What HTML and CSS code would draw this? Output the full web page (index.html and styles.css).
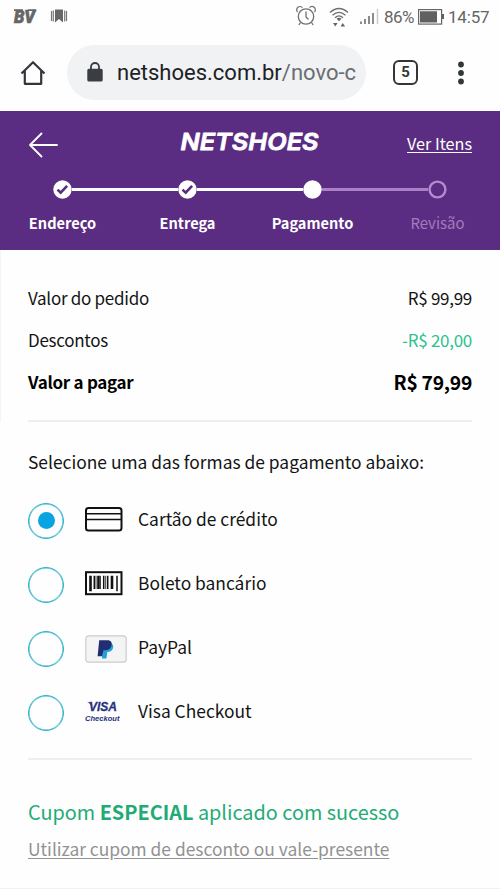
FILE: index.html
```html
<!DOCTYPE html>
<html lang="pt-BR">
<head>
<meta charset="utf-8">
<title>Netshoes - Pagamento</title>
<link rel="stylesheet" href="styles.css">
</head>
<body>
<div class="status">
  <svg class="status-left" width="56" height="18" viewBox="0 0 56 18">
    <text class="bv" x="0" y="15" textLength="21" lengthAdjust="spacingAndGlyphs">BV</text>
    <path d="M0 2.200h9M14 2.200h8" stroke="#666" stroke-width="1.800"/>
    <path d="M41 1.500h8v13l-4-3.500-4 3.500z" fill="#666"/>
    <path d="M39.300 2.500v11M50.700 2.500v11M37.500 3v10M52.500 3v10" stroke="#777" stroke-width="1.200"/>
  </svg>
  <div class="status-right">
    <svg class="alarm" width="20" height="20" viewBox="0 0 20 20" fill="none" stroke="#707070" stroke-width="1.300">
      <circle cx="10" cy="10.500" r="7.700"/><path d="M10 5.500v5.500l2.500 2.500M1.500 6A3 3 0 0 1 6.500 1.700M13.500 1.700A3 3 0 0 1 18.500 6M4.500 16.500L2.800 19M15.500 16.500l1.700 2.500"/>
    </svg>
    <svg class="wifi" width="20" height="21" viewBox="0 0 20 21" fill="none" stroke="#707070" stroke-width="1.300">
      <path d="M1 5.500Q10-2.500 19 5.500M3.500 8.300Q10 2.500 16.500 8.300M6 10.800Q10 7 14 10.800"/>
      <path d="M7.500 11.600Q10 10 12.500 11.600L10 14.200zM4 16h4.600l-2.300 3.600zM11.500 19.600h4.600L13.800 16z" fill="#666" stroke="none"/>
    </svg>
    <svg class="signal" width="20" height="18" viewBox="0 0 20 18" stroke="#666" stroke-width="1.500">
      <path d="M1 13.500v2.500M5 11v5M9 8v8M13 5v11"/><path d="M17.500 1v15" stroke="#ccc"/>
    </svg>
    <span class="percent">86%</span>
    <svg class="battery" width="26" height="16" viewBox="0 0 26 16">
      <rect x=".6" y=".6" width="23" height="14.500" fill="none" stroke="#666" stroke-width="1.200"/>
      <path d="M2 2.200h17v11.300H2zM24 5h2v5h-2z" fill="#606060"/>
    </svg>
    <span class="clock">14:57</span>
  </div>
</div>

<div class="browser">
  <svg class="home" width="26" height="26" viewBox="0 0 26 26" fill="none" stroke="#333639" stroke-width="2.200">
    <path d="M1.500 13.500L13 2.200l11.500 11.300M4.800 11v12.800h16.400V11" stroke-linejoin="round"/>
  </svg>
  <div class="pill">
    <svg class="lock" width="16" height="20" viewBox="0 0 16 20">
      <rect x=".3" y="6.800" width="15.400" height="12.800" rx="1.600" fill="#3a3d41"/><path d="M4 7.500V5a4 4 0 0 1 8 0v2.500" fill="none" stroke="#3a3d41" stroke-width="1.800"/>
    </svg>
    <div class="url">netshoes.com.br<span>/novo-c</span></div>
  </div>
  <div class="tabs">5</div>
  <svg class="dots" width="6" height="24" viewBox="0 0 6 24" fill="#333639"><circle cx="3" cy="3.500" r="2.900"/><circle cx="3" cy="12" r="2.900"/><circle cx="3" cy="20.500" r="2.900"/></svg>
</div>

<header>
  <div class="bar">
    <svg class="back" width="30" height="26" viewBox="0 0 30 26" fill="none" stroke="#fff" stroke-width="1.800" stroke-linecap="round" stroke-linejoin="round"><path d="M13.500 1.500L2 13l11.500 11.500M2 13h27"/></svg>
    <svg class="logo" width="142" height="22" viewBox="0 0 142 22"><text x="1.500" y="18.500" textLength="138" lengthAdjust="spacingAndGlyphs">NETSHOES</text></svg>
    <a class="items">Ver Itens</a>
  </div>
  <div class="steps">
    <div class="step"><div class="track"><i class="blank"></i><svg class="dot" width="19" height="19" viewBox="0 0 19 19"><circle cx="9.500" cy="9.500" r="9.200" fill="#fff"/><path d="M4.500 9.600l3.200 3.100 6.400-6.900" fill="none" stroke="#5b2d82" stroke-width="2.600"/></svg><i></i></div><b>Endereço</b></div>
    <div class="step"><div class="track"><i></i><svg class="dot" width="19" height="19" viewBox="0 0 19 19"><circle cx="9.500" cy="9.500" r="9.200" fill="#fff"/><path d="M4.500 9.600l3.200 3.100 6.400-6.900" fill="none" stroke="#5b2d82" stroke-width="2.600"/></svg><i></i></div><b>Entrega</b></div>
    <div class="step"><div class="track"><i></i><svg class="dot" width="19" height="19" viewBox="0 0 19 19"><circle cx="9.500" cy="9.500" r="9.200" fill="#fff"/></svg><i class="todo"></i></div><b>Pagamento</b></div>
    <div class="step off"><div class="track"><i class="todo"></i><svg class="dot" width="19" height="19" viewBox="0 0 19 19"><circle cx="9.500" cy="9.500" r="7.900" fill="none" stroke="#b48ad0" stroke-width="2.400"/></svg><i class="blank"></i></div><b>Revisão</b></div>
  </div>
</header>

<main>
  <div class="summary">
    <section class="totals">
      <div class="row"><span>Valor do pedido</span><span>R$ 99,99</span></div>
      <div class="row"><span>Descontos</span><span class="discount">-R$ 20,00</span></div>
      <div class="row total"><span>Valor a pagar</span><span class="amount">R$ 79,99</span></div>
    </section>
  </div>
  <section class="methods">
    <p>Selecione uma das formas de pagamento abaixo:</p>
    <div class="method">
      <span class="radio on"></span>
      <span class="icon"><svg width="38" height="25" viewBox="0 0 38 25" fill="none" stroke="#111"><rect x="1" y="1" width="35.500" height="22.500" rx="2.500" stroke-width="2"/><path d="M1 6.800h35.500M1 12.500h35.500" stroke-width="1.500"/></svg></span>
      <span>Cartão de crédito</span>
    </div>
    <div class="method">
      <span class="radio"></span>
      <span class="icon"><svg width="38" height="25" viewBox="0 0 38 25" fill="none" stroke="#111"><rect x="1" y="1.200" width="35.500" height="22" stroke-width="2"/><path d="M5.500 4.800v15.400M13.500 4.800v13.200M27 4.800v13.200" stroke-width="2.600"/><path d="M9.300 4.800v13.200M18.700 4.800v13.200M22.700 4.800v13.200M32 4.800v15.400" stroke-width="1.500"/><path d="M11 4.800v13.200M15.500 4.800v13.200M20.700 4.800v13.200" stroke-width=".8"/></svg></span>
      <span>Boleto bancário</span>
    </div>
    <div class="method">
      <span class="radio"></span>
      <span class="icon paypal"><svg width="42" height="28" viewBox="0 0 42 28"><rect x=".8" y=".8" width="40.400" height="26.400" rx="3" fill="#f4f4f4" stroke="#ccc" stroke-width="1.200"/><path d="M18 8.500h8.500c2.200 1.300 2 4.400.8 6.300-1.200 1.800-2.800 2.200-5 2.200l-.9 6.500H17z" fill="#1fa2dc"/><path d="M14.200 5.300h8.300c3.700 0 4.700 2.300 4 5.300-.7 3.300-3 4.700-6.300 4.700h-1.800l-1.200 5.900h-4.600z" fill="#222d72"/></svg></span>
      <span>PayPal</span>
    </div>
    <div class="method">
      <span class="radio"></span>
      <span class="icon"><svg class="visa" width="38" height="25" viewBox="0 0 38 25"><path d="M2.200 3.200h3.300l1.500 4.500C6 5.500 4.500 4.100 2.200 3.200z" fill="#26327b"/><text class="visa-name" x="4" y="12.300" textLength="28" lengthAdjust="spacingAndGlyphs">VISA</text><text class="visa-sub" x="0" y="21.500" textLength="34.500" lengthAdjust="spacingAndGlyphs">Checkout</text></svg></span>
      <span>Visa Checkout</span>
    </div>
  </section>
  <section class="coupon">
    <div class="ok">Cupom <b>ESPECIAL</b> aplicado com sucesso</div>
    <div class="use"><a>Utilizar cupom de desconto ou vale-presente</a></div>
  </section>
</main>
</body>
</html>
```
FILE: styles.css
```css
* { box-sizing: border-box; }
body {
  margin: 0;
  width: 500px;
  height: 889px;
  overflow: hidden;
  background: #fefefe;
  border-bottom: 1px solid #f0f0f0;
  color: #141414;
  font: 17.400px/26px "Noto Sans CJK SC", "Noto Sans", sans-serif;
  white-space: nowrap;
}
svg { display: block; flex: none; overflow: visible; }
.status {
  height: 34px;
  display: flex;
  justify-content: space-between;
  padding: 8px 10px 0 14px;
  font: 17px/19px Roboto, sans-serif;
  color: #666;
}
.bv { font: italic 900 18px Roboto, sans-serif; fill: #666; stroke: #666; stroke-width: .6px; }
.status-right { display: flex; }
.alarm { margin: -2px 13px 0 -1px; }
.wifi { margin: -1px 11px 0 0; }
.signal { margin: 0 4px 0 0; }
.percent { width: 34px; letter-spacing: -.5px; }
.battery { margin: 1px 4px 0 0; }
.clock { width: 42px; letter-spacing: -.2px; }
.browser {
  height: 77px;
  display: flex;
  align-items: center;
  padding: 0 36px 0 20px;
}
.home { margin-right: 21px; }
.pill {
  width: 299px;
  height: 55px;
  border-radius: 28px;
  background: #f1f2f4;
  display: flex;
  align-items: center;
  padding-left: 20px;
  margin-right: 27px;
}
.lock { margin: -2px 14px 0 0; }
.url {
  width: 239px;
  overflow: hidden;
  font: 22px/30px Roboto, sans-serif;
  color: #202124;
}
.url span { color: #6a6d71; }
.tabs {
  width: 25px;
  height: 25px;
  border: 2.500px solid #333639;
  border-radius: 6px;
  font: bold 15px/21px Roboto, sans-serif;
  text-align: center;
  color: #333639;
  margin: -1px 40px 0 0;
}
header {
  height: 139px;
  background: #5b2d82;
  color: #fff;
  padding-top: 15px;
}
.bar {
  height: 36px;
  display: flex;
  padding: 0 28px;
}
.back { margin: 6px 121px 0 0; }
.logo { margin-top: 5px; }
.logo text {
  font: italic 600 23px Inter, sans-serif;
  fill: #fff;
  stroke: #fff;
  stroke-width: .8px;
  stroke-linejoin: round;
}
.items {
  margin: 4px 0 0 auto;
  font-size: 16.200px;
  text-decoration: underline;
  text-underline-offset: 2px;
}
.steps { display: grid; grid-template-columns: repeat(4, 125px); margin-top: 18px; }
.step { display: flex; flex-direction: column; align-items: center; }
.track { width: 100%; display: flex; align-items: center; }
.track i { flex: 1; height: 3px; background: #fff; }
.track .blank { background: none; }
.track .todo { background: #ab80c9; }
.step b { font-size: 14.600px; line-height: 22px; margin-top: 13px; }
.step.off b { font-size: 15px; font-weight: 400; color: #a07cbc; }
main { padding: 0 28px; }
.summary { margin-left: -28px; padding-left: 27px; border-left: 1px solid #f4f4f4; }
.totals { height: 172px; padding-top: 35px; border-bottom: 2px solid #eee; }
.row { display: flex; justify-content: space-between; height: 42px; font-size: 17px; letter-spacing: -.28px; }
.total { font-weight: 700; color: #000; }
.discount { color: #2cc28d; }
.amount { font-size: 19.300px; }
.methods { height: 338px; padding-top: 27px; border-bottom: 2px solid #eee; }
.methods p { margin: 0 0 13px; }
.method { height: 64px; display: flex; align-items: center; }
.radio {
  width: 36px;
  height: 36px;
  border: 1.500px solid #2eb3cc;
  border-radius: 50%;
  margin: 1px 21px 0 0;
  display: flex;
  align-items: center;
  justify-content: center;
  box-shadow: inset 0 0 0 .5px #2eb3cc;
}
.on::after { content: ""; width: 17px; height: 17px; border-radius: 50%; background: #0aa5e0; }
.icon { width: 53px; margin-top: -2px; }
.icon.paypal { margin-top: 1px; }
.method > :last-child { margin-top: -3px; }
.visa-name { font: italic 700 12.500px "Liberation Sans", sans-serif; fill: #26327b; stroke: #26327b; stroke-width: .3px; }
.visa-sub { font: italic 700 7px "Liberation Sans", sans-serif; fill: #26327b; }
.coupon { padding-top: 37px; }
.ok { height: 39px; font-size: 19.850px; line-height: 30px; color: #1fab76; }
.use { font-size: 17.400px; color: #929292; }
.use a { text-decoration: underline; text-underline-offset: 2px; }
```
